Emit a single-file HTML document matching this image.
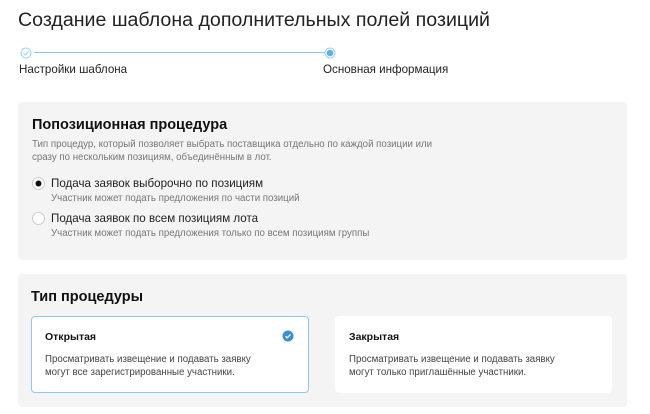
<!DOCTYPE html><html><head><meta charset="utf-8"><style>
*{box-sizing:border-box;margin:0;padding:0}
body{width:650px;height:414px;background:#fff;font-family:"Liberation Sans",sans-serif;color:#222;position:relative;overflow:hidden}
.a{position:absolute}
.panel{background:#f4f4f4;border-radius:4px}
.card{background:#fff;border-radius:4px}
.rl{font-size:11.6px;color:#222}
.sub{font-size:9.7px;color:#777}
</style></head><body>
<div class="a" style="left:18px;top:9px;font-size:19.6px;color:#222">Создание шаблона дополнительных полей позиций</div>
<div class="a" style="left:34px;top:52px;width:291px;height:1px;background:#8cc8ef"></div>
<svg class="a" style="left:20px;top:47px" width="12" height="12"><circle cx="6" cy="6" r="5" fill="#fff" stroke="#9fd2f2"/><path d="M3.5 6.2l1.8 1.7 3.3-3.4" fill="none" stroke="#9fd2f2" stroke-width="1"/></svg>
<svg class="a" style="left:324px;top:47px" width="12" height="12"><circle cx="6" cy="6" r="5" fill="#fff" stroke="#9fd2f2"/><circle cx="6" cy="6" r="3.3" fill="#5ab3ee"/></svg>
<div class="a rl" style="left:19px;top:63px">Настройки шаблона</div>
<div class="a rl" style="left:323px;top:63px">Основная информация</div>
<div class="a panel" style="left:18px;top:102px;width:609px;height:158px"></div>
<div class="a" style="left:32px;top:117px;font-size:14.5px;font-weight:bold;color:#111">Попозиционная процедура</div>
<div class="a sub" style="left:32px;top:138px;line-height:13px;width:420px">Тип процедур, который позволяет выбрать поставщика отдельно по каждой позиции или сразу по нескольким позициям, объединённым в лот.</div>
<svg class="a" style="left:32px;top:177px" width="13" height="13"><circle cx="6.5" cy="6.5" r="6" fill="#fff" stroke="#ccc"/><circle cx="6.5" cy="6.5" r="3" fill="#111"/></svg>
<div class="a rl" style="left:51px;top:177px">Подача заявок выборочно по позициям</div>
<div class="a sub" style="left:51px;top:193px">Участник может подать предложения по части позиций</div>
<svg class="a" style="left:32px;top:212px" width="13" height="13"><circle cx="6.5" cy="6.5" r="6" fill="#fff" stroke="#ccc"/></svg>
<div class="a rl" style="left:51px;top:212px">Подача заявок по всем позициям лота</div>
<div class="a sub" style="left:51px;top:228px">Участник может подать предложения только по всем позициям группы</div>
<div class="a panel" style="left:18px;top:274px;width:609px;height:133px"></div>
<div class="a" style="left:31px;top:289px;font-size:14.5px;font-weight:bold;color:#111">Тип процедуры</div>
<div class="a card" style="left:31px;top:316px;width:278px;height:77px;border:1px solid #8cc8ef"></div>
<div class="a" style="left:45px;top:331px;font-size:10.5px;font-weight:bold;color:#111">Открытая</div>
<svg class="a" style="left:282px;top:330px" width="12" height="12"><circle cx="6" cy="6" r="5.5" fill="#3a8fd1"/><path d="M3.5 6.2l1.7 1.6 3.3-3.3" fill="none" stroke="#fff" stroke-width="1.3"/></svg>
<div class="a sub" style="left:45px;top:353px;line-height:13px;color:#444">Просматривать извещение и подавать заявку<br>могут все зарегистрированные участники.</div>
<div class="a card" style="left:335px;top:316px;width:277px;height:77px"></div>
<div class="a" style="left:349px;top:331px;font-size:10.5px;font-weight:bold;color:#111">Закрытая</div>
<div class="a sub" style="left:349px;top:353px;line-height:13px;color:#444">Просматривать извещение и подавать заявку<br>могут только приглашённые участники.</div>
</body></html>
